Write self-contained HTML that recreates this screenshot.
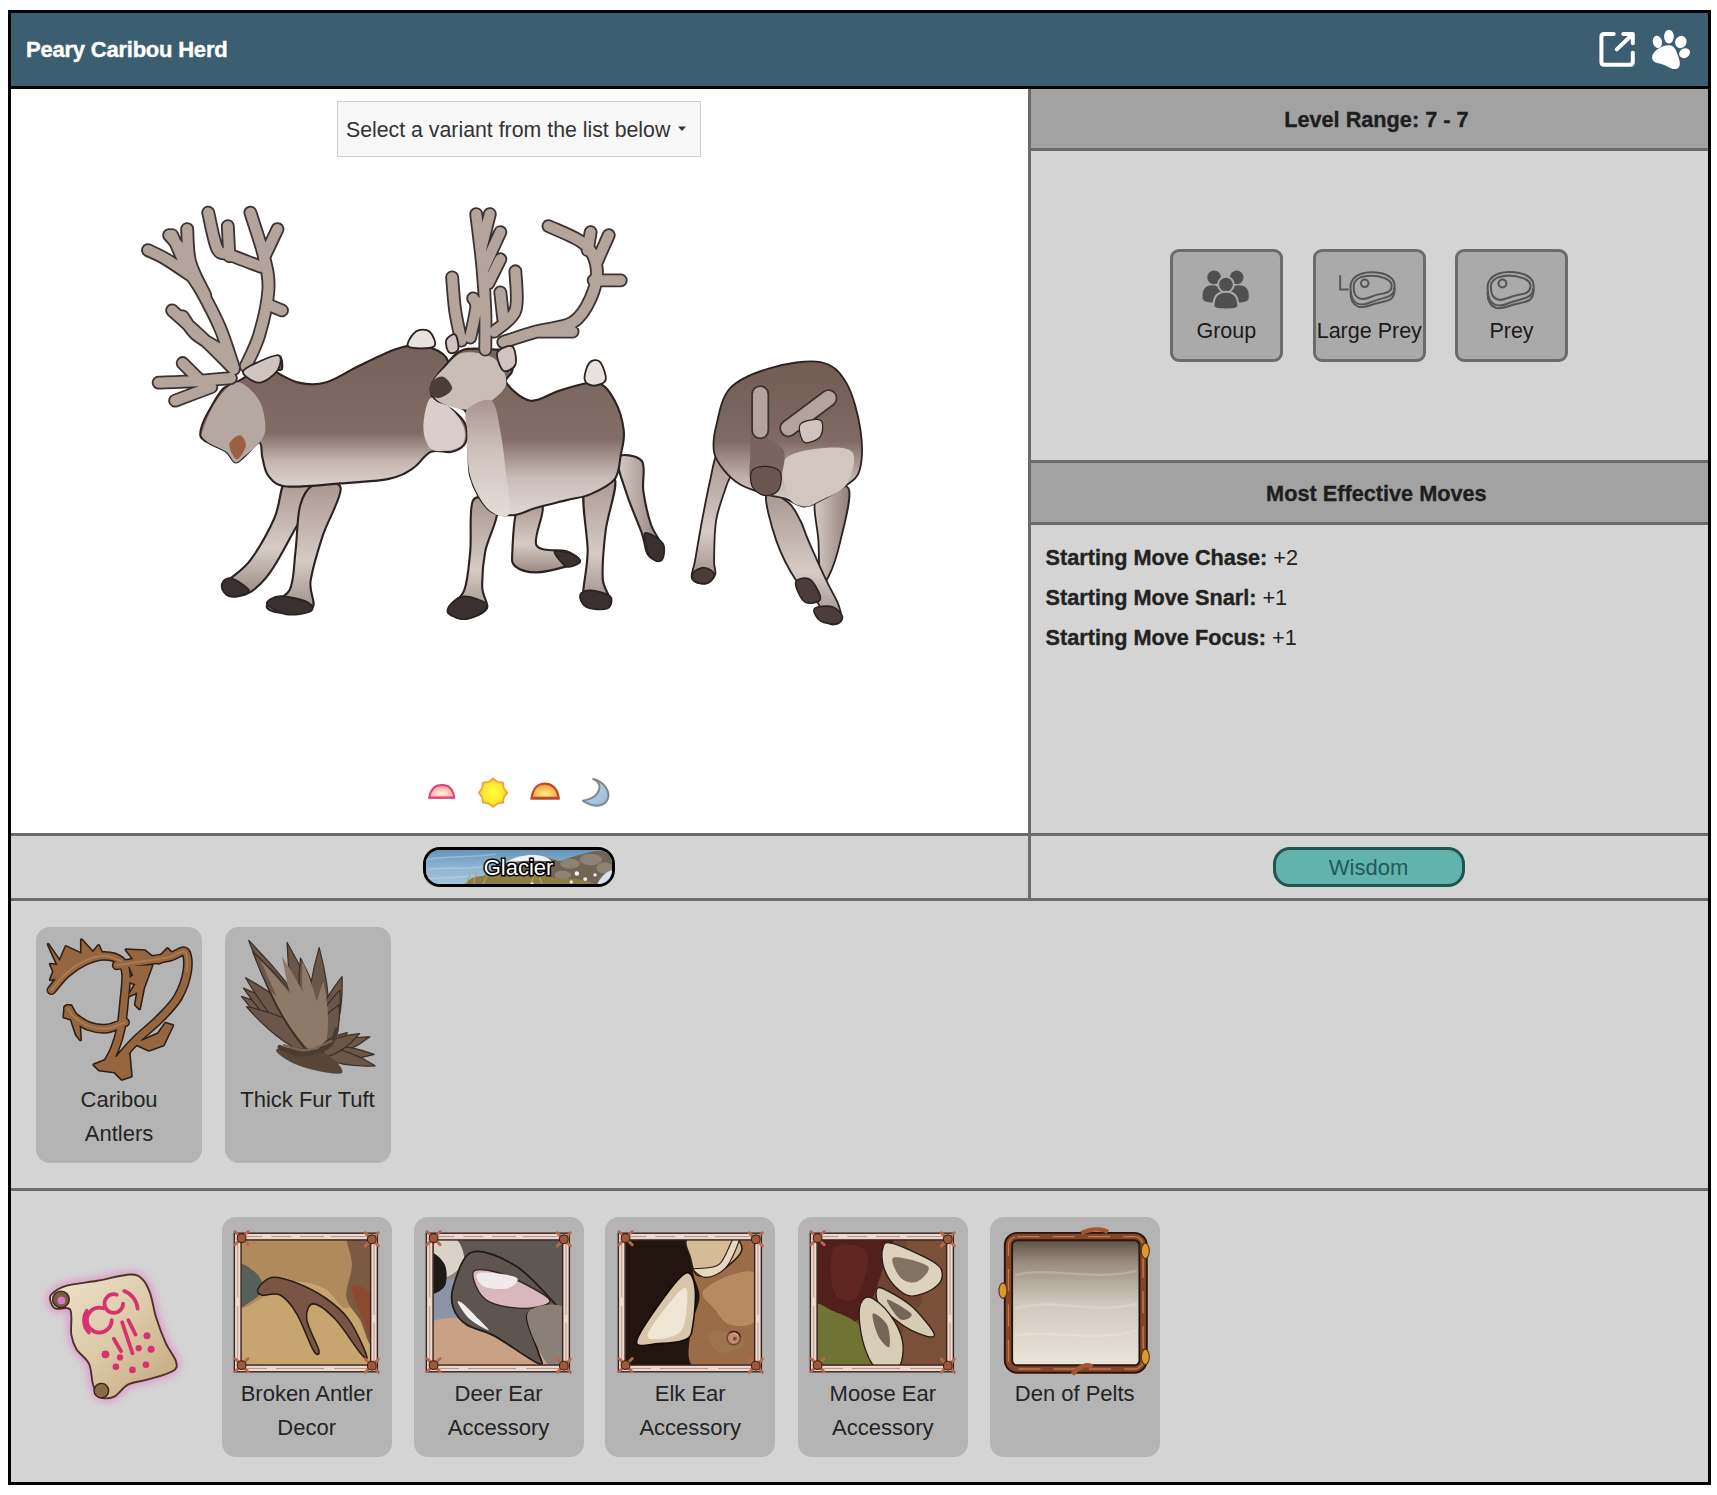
<!DOCTYPE html>
<html><head><meta charset="utf-8">
<style>
html,body{margin:0;padding:0;background:#fff;width:1717px;height:1495px;overflow:hidden;position:relative;font-family:"Liberation Sans",sans-serif;}
.a{position:absolute;}
.ln{position:absolute;background:#6b6b6b;}
.t{position:absolute;white-space:nowrap;}
.btn{position:absolute;top:248.7px;width:106.6px;height:107px;border:3px solid #6b6b6b;border-radius:9px;background:#aaa;}
.btn .lb{position:absolute;left:-5px;right:-5px;top:67px;text-align:center;font-size:21.5px;color:#1b1b1b;white-space:nowrap;}
.card{position:absolute;background:#b4b4b4;border-radius:14px;}
.card .lb{position:absolute;left:-10px;right:-10px;text-align:center;font-size:22px;line-height:34px;color:#242424;}
.mv{position:absolute;left:1045.5px;font-size:21.7px;color:#222;white-space:nowrap;}
.mv b{font-weight:bold;-webkit-text-stroke:0.35px #222;}
</style></head><body>
<!-- outer frame -->
<div class="a" style="left:8px;top:10px;width:1702.7px;height:1474.7px;background:#000"></div>
<div class="a" style="left:10.7px;top:12.8px;width:1697.3px;height:1469.2px;background:#d4d4d4"></div>
<!-- header -->
<div class="a" style="left:10.7px;top:12.8px;width:1697.3px;height:73.2px;background:#3b5e71"></div>
<div class="a" style="left:10.7px;top:86px;width:1697.3px;height:2.9px;background:#000"></div>
<div class="t" id="title" style="left:26px;top:36.5px;letter-spacing:-0.22px;font-size:22px;font-weight:bold;color:#fff;-webkit-text-stroke:0.4px #fff;">Peary Caribou Herd</div>
<!--HDRICONS-->
<svg class="a" style="left:1590px;top:22px" width="110" height="55" viewBox="0 0 1717 858">
<g fill="none" stroke="#fff" stroke-width="62" stroke-linecap="round" stroke-linejoin="round">
<path d="M370,188 H220 Q178,188 178,230 V626 Q178,668 220,668 H626 Q668,668 668,626 V480"/>
<path d="M418,428 L662,194 M520,188 H668 V330"/>
</g>
<g fill="#fff">
<ellipse cx="1052" cy="310" rx="72" ry="96" transform="rotate(-12 1052 310)"/>
<ellipse cx="1232" cy="228" rx="76" ry="106"/>
<ellipse cx="1418" cy="312" rx="88" ry="98" transform="rotate(28 1418 312)"/>
<ellipse cx="1476" cy="486" rx="88" ry="74" transform="rotate(-30 1476 486)"/>
<path d="M1230,362 C1320,362 1345,440 1375,530 C1405,610 1420,690 1370,722 C1320,752 1260,725 1200,690 C1140,655 1060,650 1010,625 C960,600 955,520 1010,465 C1060,410 1140,362 1230,362 Z"/>
</g>
</svg>
<!--/HDRICONS-->
<!-- left white panel -->
<div class="a" style="left:10.7px;top:88.9px;width:1017.3px;height:744.1px;background:#fff"></div>
<!--CARIBOU-->
<svg class="a" style="left:0;top:0" width="1717" height="1495" viewBox="0 0 1717 1495">
<defs>
<linearGradient id="g1" x1="0" y1="0" x2="0" y2="1"><stop offset="0" stop-color="#76625a"/><stop offset="0.62" stop-color="#806c65"/><stop offset="0.82" stop-color="#c4b6b0"/><stop offset="1" stop-color="#dcd2ce"/></linearGradient>
<linearGradient id="g2" x1="0" y1="0" x2="0" y2="1"><stop offset="0" stop-color="#76625a"/><stop offset="0.55" stop-color="#826e67"/><stop offset="0.78" stop-color="#c9bdb8"/><stop offset="1" stop-color="#e0d8d4"/></linearGradient>
<linearGradient id="g3" x1="0" y1="0" x2="0" y2="1"><stop offset="0" stop-color="#725c54"/><stop offset="0.55" stop-color="#7f6b64"/><stop offset="0.8" stop-color="#bfb1ab"/><stop offset="1" stop-color="#d8ceca"/></linearGradient>
<linearGradient id="lg" x1="0" y1="0" x2="0" y2="1"><stop offset="0" stop-color="#a89790"/><stop offset="0.6" stop-color="#d6cbc6"/><stop offset="1" stop-color="#9a8a84"/></linearGradient>
<linearGradient id="lgh" x1="0" y1="0" x2="1" y2="0"><stop offset="0" stop-color="#d6cbc6"/><stop offset="1" stop-color="#8f7f79"/></linearGradient>
<linearGradient id="chestg" x1="0" y1="0" x2="0" y2="1"><stop offset="0" stop-color="#a8968f"/><stop offset="0.45" stop-color="#cfc3be"/><stop offset="1" stop-color="#e4dcd8"/></linearGradient>
<radialGradient id="chest" cx="0.5" cy="0.5" r="0.5"><stop offset="0" stop-color="#e2d9d5"/><stop offset="1" stop-color="#e2d9d5" stop-opacity="0"/></radialGradient>
</defs>
<g transform="translate(130,190) scale(0.30094)">
<path d="M520.0,960.0 C498.3,976.7 500.0,1045.0 480.0,1090.0 C460.0,1135.0 425.0,1195.8 400.0,1230.0 C375.0,1264.2 345.0,1278.3 330.0,1295.0 C315.0,1311.7 301.7,1321.7 310.0,1330.0 C318.3,1338.3 355.8,1352.5 380.0,1345.0 C404.2,1337.5 430.0,1315.8 455.0,1285.0 C480.0,1254.2 504.2,1209.2 530.0,1160.0 C555.8,1110.8 611.7,1023.3 610.0,990.0 C608.3,956.7 541.7,943.3 520.0,960.0 Z" fill="url(#lg)" stroke="#2b2222" stroke-width="7" />
<path d="M610.0,980.0 C632.5,970.0 695.0,961.7 700.0,990.0 C705.0,1018.3 656.7,1098.3 640.0,1150.0 C623.3,1201.7 605.8,1260.0 600.0,1300.0 C594.2,1340.0 621.7,1372.5 605.0,1390.0 C588.3,1407.5 525.0,1406.7 500.0,1405.0 C475.0,1403.3 450.0,1392.5 455.0,1380.0 C460.0,1367.5 514.2,1360.0 530.0,1330.0 C545.8,1300.0 544.2,1246.7 550.0,1200.0 C555.8,1153.3 555.0,1086.7 565.0,1050.0 C575.0,1013.3 587.5,990.0 610.0,980.0 Z" fill="url(#lg)" stroke="#2b2222" stroke-width="7" />
<path d="M305.0,1310.0 C307.5,1300.8 320.0,1286.7 335.0,1290.0 C350.0,1293.3 390.8,1320.0 395.0,1330.0 C399.2,1340.0 372.5,1347.5 360.0,1350.0 C347.5,1352.5 329.2,1351.7 320.0,1345.0 C310.8,1338.3 302.5,1319.2 305.0,1310.0 Z" fill="#3b3030" stroke="#2b2222" stroke-width="6" />
<path d="M455.0,1375.0 C451.7,1365.0 477.5,1350.8 500.0,1350.0 C522.5,1349.2 573.3,1361.7 590.0,1370.0 C606.7,1378.3 611.7,1393.3 600.0,1400.0 C588.3,1406.7 544.2,1414.2 520.0,1410.0 C495.8,1405.8 458.3,1385.0 455.0,1375.0 Z" fill="#3b3030" stroke="#2b2222" stroke-width="6" />
<path d="M480.0,600.0 C489.2,607.5 531.7,633.3 560.0,640.0 C588.3,646.7 616.7,649.2 650.0,640.0 C683.3,630.8 721.7,603.3 760.0,585.0 C798.3,566.7 846.7,541.7 880.0,530.0 C913.3,518.3 933.3,512.5 960.0,515.0 C986.7,517.5 1023.3,530.8 1040.0,545.0 C1056.7,559.2 1065.8,583.3 1060.0,600.0 C1054.2,616.7 1013.3,628.3 1005.0,645.0 C996.7,661.7 999.2,685.8 1010.0,700.0 C1020.8,714.2 1052.5,716.7 1070.0,730.0 C1087.5,743.3 1107.5,761.7 1115.0,780.0 C1122.5,798.3 1122.5,825.0 1115.0,840.0 C1107.5,855.0 1089.2,865.0 1070.0,870.0 C1050.8,875.0 1021.7,860.8 1000.0,870.0 C978.3,879.2 963.3,910.0 940.0,925.0 C916.7,940.0 900.0,951.7 860.0,960.0 C820.0,968.3 756.7,970.8 700.0,975.0 C643.3,979.2 560.0,989.2 520.0,985.0 C480.0,980.8 473.3,965.8 460.0,950.0 C446.7,934.2 445.0,908.3 440.0,890.0 C435.0,871.7 440.0,840.8 430.0,840.0 C420.0,839.2 393.3,874.2 380.0,885.0 C366.7,895.8 360.0,907.5 350.0,905.0 C340.0,902.5 333.3,880.0 320.0,870.0 C306.7,860.0 284.2,853.3 270.0,845.0 C255.8,836.7 240.0,830.8 235.0,820.0 C230.0,809.2 234.2,796.7 240.0,780.0 C245.8,763.3 258.3,740.0 270.0,720.0 C281.7,700.0 295.0,674.2 310.0,660.0 C325.0,645.8 345.0,643.3 360.0,635.0 C375.0,626.7 378.3,624.2 400.0,610.0 C421.7,595.8 472.5,552.5 490.0,550.0 C507.5,547.5 506.7,586.7 505.0,595.0 C503.3,603.3 470.8,592.5 480.0,600.0 Z" fill="url(#g1)" stroke="#2b2222" stroke-width="7" />
<path d="M245.0,790.0 C250.8,773.3 263.3,740.8 275.0,720.0 C286.7,699.2 300.0,678.3 315.0,665.0 C330.0,651.7 345.8,634.2 365.0,640.0 C384.2,645.8 415.8,675.0 430.0,700.0 C444.2,725.0 450.0,766.7 450.0,790.0 C450.0,813.3 441.7,824.2 430.0,840.0 C418.3,855.8 393.3,874.2 380.0,885.0 C366.7,895.8 360.0,907.5 350.0,905.0 C340.0,902.5 333.3,880.0 320.0,870.0 C306.7,860.0 283.3,853.3 270.0,845.0 C256.7,836.7 244.2,829.2 240.0,820.0 C235.8,810.8 239.2,806.7 245.0,790.0 Z" fill="#b5a7a1" stroke="none" stroke-width="0" />
<path d="M330.0,845.0 C331.7,831.7 355.8,814.2 365.0,815.0 C374.2,815.8 386.7,836.7 385.0,850.0 C383.3,863.3 364.2,895.8 355.0,895.0 C345.8,894.2 328.3,858.3 330.0,845.0 Z" fill="#9b5f46" stroke="none" stroke-width="0" />
<path d="M1000.0,690.0 C1015.8,680.0 1051.7,713.3 1070.0,730.0 C1088.3,746.7 1104.2,770.8 1110.0,790.0 C1115.8,809.2 1113.3,832.5 1105.0,845.0 C1096.7,857.5 1077.5,862.5 1060.0,865.0 C1042.5,867.5 1014.2,872.5 1000.0,860.0 C985.8,847.5 975.0,818.3 975.0,790.0 C975.0,761.7 984.2,700.0 1000.0,690.0 Z" fill="#d9cec9" stroke="none" stroke-width="0" />
<path d="M925.0,520.0 C915.0,511.7 938.3,478.3 950.0,470.0 C961.7,461.7 985.0,461.7 995.0,470.0 C1005.0,478.3 1021.7,511.7 1010.0,520.0 C998.3,528.3 935.0,528.3 925.0,520.0 Z" fill="#e8e2de" stroke="#2b2222" stroke-width="6" />
<path d="M385.0,585.0 C392.5,567.5 417.5,522.5 430.0,480.0 C442.5,437.5 457.5,373.3 460.0,330.0 C462.5,286.7 455.0,262.5 445.0,220.0 C435.0,177.5 407.5,99.2 400.0,75.0 M445.0,225.0 C452.5,209.2 482.5,145.8 490.0,130.0 M455.0,380.0 C463.3,383.3 496.7,396.7 505.0,400.0 M435.0,255.0 C417.5,248.3 354.2,225.0 330.0,215.0 C305.8,205.0 301.7,218.3 290.0,195.0 C278.3,171.7 265.0,95.0 260.0,75.0 M330.0,220.0 C329.2,203.3 325.8,136.7 325.0,120.0 M345.0,590.0 C337.5,568.3 317.5,501.7 300.0,460.0 C282.5,418.3 258.3,373.3 240.0,340.0 C221.7,306.7 206.7,291.7 190.0,260.0 C173.3,228.3 148.3,168.3 140.0,150.0 M210.0,290.0 C195.0,280.0 145.0,245.0 120.0,230.0 C95.0,215.0 70.0,205.0 60.0,200.0 M190.0,260.0 C186.7,250.0 180.0,218.3 170.0,200.0 C160.0,181.7 136.7,158.3 130.0,150.0 M250.0,350.0 C241.7,331.7 210.0,276.7 200.0,240.0 C190.0,203.3 191.7,148.3 190.0,130.0 M345.0,595.0 C330.8,580.8 294.2,542.5 260.0,510.0 C225.8,477.5 160.0,418.3 140.0,400.0 M300.0,530.0 C286.7,521.7 240.8,498.3 220.0,480.0 C199.2,461.7 182.5,430.0 175.0,420.0 M335.0,625.0 C315.8,626.7 260.0,632.5 220.0,635.0 C180.0,637.5 115.8,639.2 95.0,640.0 M230.0,630.0 C220.8,620.8 184.2,584.2 175.0,575.0 M270.0,655.0 C250.0,662.5 170.0,692.5 150.0,700.0" fill="none" stroke="#3b3333" stroke-width="46" stroke-linecap="round" stroke-linejoin="round"/>
<path d="M385.0,585.0 C392.5,567.5 417.5,522.5 430.0,480.0 C442.5,437.5 457.5,373.3 460.0,330.0 C462.5,286.7 455.0,262.5 445.0,220.0 C435.0,177.5 407.5,99.2 400.0,75.0 M445.0,225.0 C452.5,209.2 482.5,145.8 490.0,130.0 M455.0,380.0 C463.3,383.3 496.7,396.7 505.0,400.0 M435.0,255.0 C417.5,248.3 354.2,225.0 330.0,215.0 C305.8,205.0 301.7,218.3 290.0,195.0 C278.3,171.7 265.0,95.0 260.0,75.0 M330.0,220.0 C329.2,203.3 325.8,136.7 325.0,120.0 M345.0,590.0 C337.5,568.3 317.5,501.7 300.0,460.0 C282.5,418.3 258.3,373.3 240.0,340.0 C221.7,306.7 206.7,291.7 190.0,260.0 C173.3,228.3 148.3,168.3 140.0,150.0 M210.0,290.0 C195.0,280.0 145.0,245.0 120.0,230.0 C95.0,215.0 70.0,205.0 60.0,200.0 M190.0,260.0 C186.7,250.0 180.0,218.3 170.0,200.0 C160.0,181.7 136.7,158.3 130.0,150.0 M250.0,350.0 C241.7,331.7 210.0,276.7 200.0,240.0 C190.0,203.3 191.7,148.3 190.0,130.0 M345.0,595.0 C330.8,580.8 294.2,542.5 260.0,510.0 C225.8,477.5 160.0,418.3 140.0,400.0 M300.0,530.0 C286.7,521.7 240.8,498.3 220.0,480.0 C199.2,461.7 182.5,430.0 175.0,420.0 M335.0,625.0 C315.8,626.7 260.0,632.5 220.0,635.0 C180.0,637.5 115.8,639.2 95.0,640.0 M230.0,630.0 C220.8,620.8 184.2,584.2 175.0,575.0 M270.0,655.0 C250.0,662.5 170.0,692.5 150.0,700.0" fill="none" stroke="#b3a49c" stroke-width="34" stroke-linecap="round" stroke-linejoin="round"/>
<path d="M375.0,605.0 C375.0,593.3 410.0,579.2 430.0,570.0 C450.0,560.8 485.0,545.0 495.0,550.0 C505.0,555.0 500.8,585.0 490.0,600.0 C479.2,615.0 449.2,639.2 430.0,640.0 C410.8,640.8 375.0,616.7 375.0,605.0 Z" fill="#cfc4bf" stroke="#2b2222" stroke-width="6" />
</g>
<g transform="translate(410,190) scale(0.3011)">
<path d="M690.0,890.0 C698.3,871.7 755.8,881.7 770.0,900.0 C784.2,918.3 770.0,965.0 775.0,1000.0 C780.0,1035.0 790.0,1080.0 800.0,1110.0 C810.0,1140.0 830.0,1160.0 835.0,1180.0 C840.0,1200.0 837.5,1225.0 830.0,1230.0 C822.5,1235.0 800.0,1225.0 790.0,1210.0 C780.0,1195.0 781.7,1173.3 770.0,1140.0 C758.3,1106.7 733.3,1051.7 720.0,1010.0 C706.7,968.3 681.7,908.3 690.0,890.0 Z" fill="url(#lgh)" stroke="#2b2222" stroke-width="7" />
<path d="M780.0,1140.0 C787.5,1133.3 830.8,1160.0 840.0,1175.0 C849.2,1190.0 842.5,1223.3 835.0,1230.0 C827.5,1236.7 804.2,1230.0 795.0,1215.0 C785.8,1200.0 772.5,1146.7 780.0,1140.0 Z" fill="#3b3030" stroke="#2b2222" stroke-width="6" />
<path d="M580.0,990.0 C595.0,950.0 668.3,936.7 680.0,960.0 C691.7,983.3 656.7,1075.0 650.0,1130.0 C643.3,1185.0 638.3,1251.7 640.0,1290.0 C641.7,1328.3 668.3,1345.0 660.0,1360.0 C651.7,1375.0 604.2,1383.3 590.0,1380.0 C575.8,1376.7 575.0,1370.0 575.0,1340.0 C575.0,1310.0 589.2,1258.3 590.0,1200.0 C590.8,1141.7 565.0,1030.0 580.0,990.0 Z" fill="url(#lg)" stroke="#2b2222" stroke-width="7" />
<path d="M565.0,1345.0 C567.5,1335.8 583.3,1329.2 600.0,1330.0 C616.7,1330.8 655.8,1340.0 665.0,1350.0 C674.2,1360.0 668.3,1384.2 655.0,1390.0 C641.7,1395.8 600.0,1392.5 585.0,1385.0 C570.0,1377.5 562.5,1354.2 565.0,1345.0 Z" fill="#3b3030" stroke="#2b2222" stroke-width="6" />
<path d="M360.0,1050.0 C376.7,1025.0 430.0,1028.3 440.0,1050.0 C450.0,1071.7 406.7,1155.0 420.0,1180.0 C433.3,1205.0 496.7,1191.7 520.0,1200.0 C543.3,1208.3 560.0,1221.7 560.0,1230.0 C560.0,1238.3 543.3,1243.3 520.0,1250.0 C496.7,1256.7 448.3,1270.0 420.0,1270.0 C391.7,1270.0 363.3,1261.7 350.0,1250.0 C336.7,1238.3 338.3,1233.3 340.0,1200.0 C341.7,1166.7 343.3,1075.0 360.0,1050.0 Z" fill="url(#lg)" stroke="#2b2222" stroke-width="7" />
<path d="M480.0,1200.0 C483.3,1193.3 525.8,1204.2 540.0,1210.0 C554.2,1215.8 568.3,1228.3 565.0,1235.0 C561.7,1241.7 534.2,1255.8 520.0,1250.0 C505.8,1244.2 476.7,1206.7 480.0,1200.0 Z" fill="#3b3030" stroke="#2b2222" stroke-width="6" />
<path d="M210.0,1030.0 C225.0,1006.7 283.3,1031.7 290.0,1060.0 C296.7,1088.3 258.3,1156.7 250.0,1200.0 C241.7,1243.3 239.2,1288.3 240.0,1320.0 C240.8,1351.7 263.3,1373.3 255.0,1390.0 C246.7,1406.7 211.7,1418.3 190.0,1420.0 C168.3,1421.7 126.7,1415.0 125.0,1400.0 C123.3,1385.0 167.5,1363.3 180.0,1330.0 C192.5,1296.7 195.0,1250.0 200.0,1200.0 C205.0,1150.0 195.0,1053.3 210.0,1030.0 Z" fill="url(#lg)" stroke="#2b2222" stroke-width="7" />
<path d="M125.0,1395.0 C125.8,1382.5 153.3,1353.3 175.0,1350.0 C196.7,1346.7 245.8,1365.0 255.0,1375.0 C264.2,1385.0 244.2,1401.7 230.0,1410.0 C215.8,1418.3 187.5,1427.5 170.0,1425.0 C152.5,1422.5 124.2,1407.5 125.0,1395.0 Z" fill="#3b3030" stroke="#2b2222" stroke-width="6" />
<path d="M70.0,650.0 C75.0,630.0 101.7,600.0 120.0,580.0 C138.3,560.0 150.0,538.3 180.0,530.0 C210.0,521.7 273.3,531.7 300.0,530.0 C326.7,528.3 333.3,508.3 340.0,520.0 C346.7,531.7 343.3,580.0 340.0,600.0 C336.7,620.0 310.0,623.3 320.0,640.0 C330.0,656.7 370.0,695.8 400.0,700.0 C430.0,704.2 463.3,675.0 500.0,665.0 C536.7,655.0 590.0,634.2 620.0,640.0 C650.0,645.8 665.0,673.3 680.0,700.0 C695.0,726.7 706.7,770.0 710.0,800.0 C713.3,830.0 705.0,853.3 700.0,880.0 C695.0,906.7 696.7,938.3 680.0,960.0 C663.3,981.7 626.7,998.3 600.0,1010.0 C573.3,1021.7 550.0,1022.5 520.0,1030.0 C490.0,1037.5 450.0,1046.7 420.0,1055.0 C390.0,1063.3 366.7,1079.2 340.0,1080.0 C313.3,1080.8 283.3,1081.7 260.0,1060.0 C236.7,1038.3 210.8,993.3 200.0,950.0 C189.2,906.7 198.3,836.7 195.0,800.0 C191.7,763.3 197.5,746.7 180.0,730.0 C162.5,713.3 108.3,713.3 90.0,700.0 C71.7,686.7 65.0,670.0 70.0,650.0 Z" fill="url(#g2)" stroke="#2b2222" stroke-width="7" />
<path d="M70.0,650.0 C73.3,630.0 101.7,603.3 120.0,585.0 C138.3,566.7 153.3,544.2 180.0,540.0 C206.7,535.8 256.7,543.3 280.0,560.0 C303.3,576.7 321.7,616.7 320.0,640.0 C318.3,663.3 290.0,685.0 270.0,700.0 C250.0,715.0 228.3,729.2 200.0,730.0 C171.7,730.8 121.7,718.3 100.0,705.0 C78.3,691.7 66.7,670.0 70.0,650.0 Z" fill="#c9bdb8" stroke="none" stroke-width="0" />
<path d="M190.0,730.0 C203.3,713.3 251.7,688.3 270.0,700.0 C288.3,711.7 291.7,758.3 300.0,800.0 C308.3,841.7 315.0,904.2 320.0,950.0 C325.0,995.8 340.0,1056.7 330.0,1075.0 C320.0,1093.3 281.7,1080.8 260.0,1060.0 C238.3,1039.2 211.7,993.3 200.0,950.0 C188.3,906.7 191.7,836.7 190.0,800.0 C188.3,763.3 176.7,746.7 190.0,730.0 Z" fill="url(#chestg)" stroke="none" stroke-width="0" />
<path d="M70.0,640.0 C76.7,630.0 98.3,616.7 110.0,620.0 C121.7,623.3 141.7,648.3 140.0,660.0 C138.3,671.7 111.7,686.7 100.0,690.0 C88.3,693.3 75.0,688.3 70.0,680.0 C65.0,671.7 63.3,650.0 70.0,640.0 Z" fill="#4a3d3a" stroke="none" stroke-width="0" />
<path d="M580.0,630.0 C577.5,617.5 586.7,585.0 595.0,575.0 C603.3,565.0 620.8,560.8 630.0,570.0 C639.2,579.2 653.3,616.7 650.0,630.0 C646.7,643.3 621.7,650.0 610.0,650.0 C598.3,650.0 582.5,642.5 580.0,630.0 Z" fill="#e8e2de" stroke="#2b2222" stroke-width="6" />
<path d="M250.0,530.0 C250.0,508.3 251.7,446.7 250.0,400.0 C248.3,353.3 245.0,303.3 240.0,250.0 C235.0,196.7 223.3,108.3 220.0,80.0 M235.0,200.0 C240.0,180.0 260.0,100.0 265.0,80.0 M245.0,260.0 C254.2,240.0 290.8,160.0 300.0,140.0 M260.0,310.0 C266.7,296.7 293.3,243.3 300.0,230.0 M170.0,500.0 C166.7,483.3 155.0,435.0 150.0,400.0 C145.0,365.0 141.7,308.3 140.0,290.0 M200.0,490.0 C203.3,473.3 218.3,411.7 220.0,390.0 C221.7,368.3 211.7,365.0 210.0,360.0 M280.0,470.0 C291.7,458.3 338.3,433.3 350.0,400.0 C361.7,366.7 350.0,291.7 350.0,270.0 M310.0,430.0 C308.3,415.0 301.7,355.0 300.0,340.0 M310.0,505.0 C328.3,499.2 381.7,480.8 420.0,470.0 C458.3,459.2 510.0,458.3 540.0,440.0 C570.0,421.7 586.7,390.0 600.0,360.0 C613.3,330.0 623.3,290.0 620.0,260.0 C616.7,230.0 606.7,203.3 580.0,180.0 C553.3,156.7 480.0,130.0 460.0,120.0 M430.0,470.0 C448.3,470.0 521.7,470.0 540.0,470.0 M610.0,300.0 C625.0,300.0 685.0,300.0 700.0,300.0 M620.0,240.0 C626.7,225.0 653.3,165.0 660.0,150.0 M590.0,200.0 C591.7,190.0 598.3,150.0 600.0,140.0" fill="none" stroke="#3b3333" stroke-width="46" stroke-linecap="round" stroke-linejoin="round"/>
<path d="M250.0,530.0 C250.0,508.3 251.7,446.7 250.0,400.0 C248.3,353.3 245.0,303.3 240.0,250.0 C235.0,196.7 223.3,108.3 220.0,80.0 M235.0,200.0 C240.0,180.0 260.0,100.0 265.0,80.0 M245.0,260.0 C254.2,240.0 290.8,160.0 300.0,140.0 M260.0,310.0 C266.7,296.7 293.3,243.3 300.0,230.0 M170.0,500.0 C166.7,483.3 155.0,435.0 150.0,400.0 C145.0,365.0 141.7,308.3 140.0,290.0 M200.0,490.0 C203.3,473.3 218.3,411.7 220.0,390.0 C221.7,368.3 211.7,365.0 210.0,360.0 M280.0,470.0 C291.7,458.3 338.3,433.3 350.0,400.0 C361.7,366.7 350.0,291.7 350.0,270.0 M310.0,430.0 C308.3,415.0 301.7,355.0 300.0,340.0 M310.0,505.0 C328.3,499.2 381.7,480.8 420.0,470.0 C458.3,459.2 510.0,458.3 540.0,440.0 C570.0,421.7 586.7,390.0 600.0,360.0 C613.3,330.0 623.3,290.0 620.0,260.0 C616.7,230.0 606.7,203.3 580.0,180.0 C553.3,156.7 480.0,130.0 460.0,120.0 M430.0,470.0 C448.3,470.0 521.7,470.0 540.0,470.0 M610.0,300.0 C625.0,300.0 685.0,300.0 700.0,300.0 M620.0,240.0 C626.7,225.0 653.3,165.0 660.0,150.0 M590.0,200.0 C591.7,190.0 598.3,150.0 600.0,140.0" fill="none" stroke="#b3a49c" stroke-width="34" stroke-linecap="round" stroke-linejoin="round"/>
<path d="M290.0,540.0 C295.0,526.7 330.0,513.3 340.0,520.0 C350.0,526.7 355.0,566.7 350.0,580.0 C345.0,593.3 320.0,606.7 310.0,600.0 C300.0,593.3 285.0,553.3 290.0,540.0 Z" fill="#cfc4bf" stroke="#2b2222" stroke-width="6" />
<path d="M120.0,500.0 C123.3,490.0 143.3,475.0 150.0,480.0 C156.7,485.0 163.3,520.0 160.0,530.0 C156.7,540.0 136.7,545.0 130.0,540.0 C123.3,535.0 116.7,510.0 120.0,500.0 Z" fill="#cfc4bf" stroke="#2b2222" stroke-width="6" />
</g>
<g transform="translate(680,340) scale(0.2006)">
<path d="M190.0,560.0 C208.3,550.0 253.3,611.7 260.0,640.0 C266.7,668.3 243.3,686.7 230.0,730.0 C216.7,773.3 190.0,838.3 180.0,900.0 C170.0,961.7 170.8,1055.0 170.0,1100.0 C169.2,1145.0 181.7,1150.8 175.0,1170.0 C168.3,1189.2 149.2,1211.7 130.0,1215.0 C110.8,1218.3 69.2,1209.2 60.0,1190.0 C50.8,1170.8 66.7,1148.3 75.0,1100.0 C83.3,1051.7 97.5,966.7 110.0,900.0 C122.5,833.3 136.7,756.7 150.0,700.0 C163.3,643.3 171.7,570.0 190.0,560.0 Z" fill="url(#lg)" stroke="#2b2222" stroke-width="9" />
<path d="M65.0,1160.0 C72.5,1148.3 102.5,1134.2 120.0,1135.0 C137.5,1135.8 166.7,1152.5 170.0,1165.0 C173.3,1177.5 155.8,1203.3 140.0,1210.0 C124.2,1216.7 87.5,1213.3 75.0,1205.0 C62.5,1196.7 57.5,1171.7 65.0,1160.0 Z" fill="#4a3d3a" stroke="#2b2222" stroke-width="8" />
<path d="M680.0,780.0 C705.0,736.7 820.0,703.3 840.0,740.0 C860.0,776.7 816.7,926.7 800.0,1000.0 C783.3,1073.3 756.7,1148.3 740.0,1180.0 C723.3,1211.7 708.3,1220.0 700.0,1190.0 C691.7,1160.0 693.3,1068.3 690.0,1000.0 C686.7,931.7 655.0,823.3 680.0,780.0 Z" fill="url(#lgh)" stroke="#2b2222" stroke-width="9" />
<path d="M430.0,770.0 C440.0,738.3 511.7,788.3 540.0,810.0 C568.3,831.7 583.3,868.3 600.0,900.0 C616.7,931.7 618.3,950.0 640.0,1000.0 C661.7,1050.0 705.0,1146.7 730.0,1200.0 C755.0,1253.3 778.3,1286.7 790.0,1320.0 C801.7,1353.3 808.3,1385.0 800.0,1400.0 C791.7,1415.0 760.0,1426.7 740.0,1410.0 C720.0,1393.3 706.7,1335.0 680.0,1300.0 C653.3,1265.0 613.3,1250.0 580.0,1200.0 C546.7,1150.0 505.0,1071.7 480.0,1000.0 C455.0,928.3 420.0,801.7 430.0,770.0 Z" fill="url(#lg)" stroke="#2b2222" stroke-width="9" />
<path d="M580.0,1200.0 C590.0,1189.2 630.0,1180.0 650.0,1195.0 C670.0,1210.0 703.3,1270.8 700.0,1290.0 C696.7,1309.2 648.3,1315.0 630.0,1310.0 C611.7,1305.0 598.3,1278.3 590.0,1260.0 C581.7,1241.7 570.0,1210.8 580.0,1200.0 Z" fill="#4a3d3a" stroke="#2b2222" stroke-width="8" />
<path d="M670.0,1340.0 C680.0,1328.3 736.7,1323.3 760.0,1330.0 C783.3,1336.7 806.7,1365.8 810.0,1380.0 C813.3,1394.2 798.3,1411.7 780.0,1415.0 C761.7,1418.3 718.3,1412.5 700.0,1400.0 C681.7,1387.5 660.0,1351.7 670.0,1340.0 Z" fill="#4a3d3a" stroke="#2b2222" stroke-width="8" />
<path d="M180.0,430.0 C193.3,376.7 205.0,288.3 250.0,240.0 C295.0,191.7 375.0,161.7 450.0,140.0 C525.0,118.3 636.7,97.5 700.0,110.0 C763.3,122.5 796.7,158.3 830.0,215.0 C863.3,271.7 889.2,377.5 900.0,450.0 C910.8,522.5 908.3,603.3 895.0,650.0 C881.7,696.7 852.5,705.0 820.0,730.0 C787.5,755.0 733.3,783.3 700.0,800.0 C666.7,816.7 650.0,831.7 620.0,830.0 C590.0,828.3 551.7,800.0 520.0,790.0 C488.3,780.0 466.7,781.7 430.0,770.0 C393.3,758.3 335.0,740.0 300.0,720.0 C265.0,700.0 241.7,676.7 220.0,650.0 C198.3,623.3 176.7,596.7 170.0,560.0 C163.3,523.3 166.7,483.3 180.0,430.0 Z" fill="url(#g3)" stroke="#2b2222" stroke-width="9" />
<path d="M520.0,600.0 C546.7,560.0 643.3,546.7 700.0,540.0 C756.7,533.3 838.3,530.0 860.0,560.0 C881.7,590.0 856.7,680.0 830.0,720.0 C803.3,760.0 735.0,781.7 700.0,800.0 C665.0,818.3 646.7,833.3 620.0,830.0 C593.3,826.7 556.7,818.3 540.0,780.0 C523.3,741.7 493.3,640.0 520.0,600.0 Z" fill="#d2c6c1" stroke="none" stroke-width="0" />
<path d="M360.0,450.0 C376.7,436.7 423.3,481.7 450.0,500.0 C476.7,518.3 511.7,526.7 520.0,560.0 C528.3,593.3 508.3,665.0 500.0,700.0 C491.7,735.0 486.7,758.3 470.0,770.0 C453.3,781.7 420.0,781.7 400.0,770.0 C380.0,758.3 358.3,731.7 350.0,700.0 C341.7,668.3 348.3,621.7 350.0,580.0 C351.7,538.3 343.3,463.3 360.0,450.0 Z" fill="#7a655e" stroke="none" stroke-width="0" />
<path d="M360.0,650.0 C371.7,633.3 406.7,628.3 430.0,630.0 C453.3,631.7 490.0,640.0 500.0,660.0 C510.0,680.0 503.3,730.8 490.0,750.0 C476.7,769.2 441.7,778.3 420.0,775.0 C398.3,771.7 370.0,750.8 360.0,730.0 C350.0,709.2 348.3,666.7 360.0,650.0 Z" fill="#6a5650" stroke="#2b2222" stroke-width="6" />
<path d="M400.0,450.0 C400.0,420.0 400.0,300.0 400.0,270.0 M540.0,440.0 C573.3,415.0 706.7,315.0 740.0,290.0" fill="none" stroke="#3b3333" stroke-width="90" stroke-linecap="round" stroke-linejoin="round"/>
<path d="M400.0,450.0 C400.0,420.0 400.0,300.0 400.0,270.0 M540.0,440.0 C573.3,415.0 706.7,315.0 740.0,290.0" fill="none" stroke="#b3a49c" stroke-width="72" stroke-linecap="round" stroke-linejoin="round"/>
<path d="M600.0,420.0 C613.3,401.7 683.3,390.0 700.0,400.0 C716.7,410.0 713.3,461.7 700.0,480.0 C686.7,498.3 636.7,520.0 620.0,510.0 C603.3,500.0 586.7,438.3 600.0,420.0 Z" fill="#cfc4bf" stroke="#2b2222" stroke-width="6" />
</g>
</svg>
<!--/CARIBOU-->
<!-- right headers -->
<div class="a" style="left:1030.75px;top:88.9px;width:677.25px;height:58.8px;background:#a2a2a2"></div>
<div class="ln" style="left:1030.75px;top:147.7px;width:677.25px;height:3.2px"></div>
<div class="ln" style="left:1030.75px;top:459.9px;width:677.25px;height:2.85px"></div>
<div class="a" style="left:1030.75px;top:462.75px;width:677.25px;height:59.15px;background:#a2a2a2"></div>
<div class="ln" style="left:1030.75px;top:521.9px;width:677.25px;height:3px"></div>
<div class="ln" style="left:1028px;top:88.9px;width:2.75px;height:809.1px"></div>
<div class="ln" style="left:10.7px;top:833px;width:1697.3px;height:2.8px"></div>
<div class="ln" style="left:10.7px;top:898px;width:1697.3px;height:2.9px"></div>
<div class="ln" style="left:10.7px;top:1187.7px;width:1697.3px;height:3.5px"></div>

<div class="t" style="left:1030.75px;width:677.25px;top:107px;padding-left:14px;box-sizing:border-box;text-align:center;font-size:21.7px;font-weight:bold;color:#1e1e1e;-webkit-text-stroke:0.35px #1e1e1e">Level Range: 7 - 7</div>
<div class="t" style="left:1030.75px;width:677.25px;top:480.5px;padding-left:14px;box-sizing:border-box;text-align:center;font-size:21.7px;font-weight:bold;color:#1e1e1e;-webkit-text-stroke:0.35px #1e1e1e">Most Effective Moves</div>

<div class="mv" style="top:545px"><b>Starting Move Chase:</b> +2</div>
<div class="mv" style="top:585px"><b>Starting Move Snarl:</b> +1</div>
<div class="mv" style="top:625px"><b>Starting Move Focus:</b> +1</div>

<!-- buttons -->
<div class="btn" style="left:1170px"><div class="lb">Group</div></div>
<div class="btn" style="left:1313px"><div class="lb">Large Prey</div></div>
<div class="btn" style="left:1455.2px"><div class="lb">Prey</div></div>

<!--BTNICONS-->
<svg class="a" style="left:1160px;top:240px" width="140" height="130" viewBox="0 0 1610 1495">
<g fill="#505050" stroke="#aaaaaa" stroke-width="22">
<path d="M490,670 C480,560 530,520 600,520 C660,520 700,560 700,600 L640,720 C560,720 495,710 490,670 Z" stroke="none"/>
<path d="M1020,670 C1030,560 980,520 910,520 C850,520 810,560 810,600 L870,720 C950,720 1015,710 1020,670 Z" stroke="none"/>
<circle cx="622" cy="430" r="78" stroke="none"/>
<circle cx="882" cy="430" r="78" stroke="none"/>
<circle cx="758" cy="512" r="90"/>
<path d="M615,760 C615,640 670,595 757,595 C845,595 900,640 900,760 C900,790 820,800 757,800 C690,800 615,790 615,760 Z"/>
</g>
</svg>
<svg class="a" style="left:1300px;top:240px" width="140" height="130" viewBox="0 0 1610 1495">
<g transform="translate(55,18) scale(0.96)"><g fill="none" stroke="#555" stroke-width="24" stroke-linejoin="round" stroke-linecap="round">
<path d="M548,560 C540,440 640,372 790,368 C930,365 1060,410 1075,510 C1085,580 1060,640 990,665 C900,690 850,700 780,730 C700,765 620,760 580,700 C555,660 550,610 548,560 Z"/>
<path d="M585,540 C585,460 660,412 790,410 C910,410 1030,450 1040,520 C1045,580 1010,610 950,620 C880,630 840,640 770,670 C700,700 640,690 605,640 C590,610 585,575 585,540 Z"/>
<path d="M548,600 C545,680 560,750 640,780 C700,800 760,770 840,745 C920,720 980,720 1030,690 C1070,660 1078,620 1075,560"/>
<circle cx="718" cy="500" r="45"/>
</g></g>
<path d="M462,405 V570 H560" fill="none" stroke="#555" stroke-width="22"/>
</svg>
<svg class="a" style="left:1440px;top:240px" width="140" height="130" viewBox="0 0 1610 1495"><g fill="none" stroke="#555" stroke-width="24" stroke-linejoin="round" stroke-linecap="round">
<path d="M548,560 C540,440 640,372 790,368 C930,365 1060,410 1075,510 C1085,580 1060,640 990,665 C900,690 850,700 780,730 C700,765 620,760 580,700 C555,660 550,610 548,560 Z"/>
<path d="M585,540 C585,460 660,412 790,410 C910,410 1030,450 1040,520 C1045,580 1010,610 950,620 C880,630 840,640 770,670 C700,700 640,690 605,640 C590,610 585,575 585,540 Z"/>
<path d="M548,600 C545,680 560,750 640,780 C700,800 760,770 840,745 C920,720 980,720 1030,690 C1070,660 1078,620 1075,560"/>
<circle cx="718" cy="500" r="45"/>
</g></svg>
<!--/BTNICONS-->
<!-- dropdown -->
<div class="a" style="left:337px;top:101px;width:362px;height:54.4px;border:1px solid #cfcfcf;background:#f8f8f8"></div>
<div class="t" style="left:346px;top:118px;font-size:21.3px;color:#333">Select a variant from the list below</div>

<!--TIMEICONS-->
<svg class="a" style="left:410px;top:760px" width="220" height="60" viewBox="0 0 1717 468">
<defs>
<radialGradient id="dawn" cx="0.5" cy="0.7" r="0.6"><stop offset="0" stop-color="#fff6c0"/><stop offset="1" stop-color="#f6a0b8"/></radialGradient>
<radialGradient id="sun" cx="0.5" cy="0.5" r="0.5"><stop offset="0" stop-color="#ffff40"/><stop offset="0.7" stop-color="#ffe830"/><stop offset="1" stop-color="#f8b030"/></radialGradient>
<radialGradient id="dusk" cx="0.5" cy="0.7" r="0.6"><stop offset="0" stop-color="#fff080"/><stop offset="1" stop-color="#f0a040"/></radialGradient>
<linearGradient id="moon" x1="0" y1="0" x2="1" y2="1"><stop offset="0" stop-color="#c8dcf0"/><stop offset="1" stop-color="#98b8d8"/></linearGradient>
</defs>
<path d="M150,292 C165,210 210,195 248,195 C290,195 335,215 345,292 Z" fill="url(#dawn)" stroke="#e0407a" stroke-width="16" stroke-linejoin="round"/>
<path d="M140,292 H352 V302 H140 Z" fill="#e0407a"/>
<path d="M648,143 L683,170 L727,176 L733,220 L760,255 L733,290 L727,334 L683,340 L648,367 L613,340 L569,334 L563,290 L536,255 L563,220 L569,176 L613,170 Z" fill="url(#sun)" stroke="#f0a030" stroke-width="12" stroke-linejoin="round"/>
<path d="M950,295 C960,215 1005,185 1052,185 C1100,185 1150,215 1160,295 Z" fill="url(#dusk)" stroke="#c04830" stroke-width="18" stroke-linejoin="round"/>
<path d="M940,292 H1168 V310 H940 Z" fill="#c04830"/>
<path d="M1430,148 C1520,170 1560,250 1545,300 C1525,360 1450,380 1350,318 C1420,305 1470,280 1478,220 C1482,185 1460,160 1430,148 Z" fill="url(#moon)" stroke="#808890" stroke-width="16" stroke-linejoin="round"/>
</svg>
<svg class="a" style="left:676px;top:124px" width="12" height="10" viewBox="0 0 12 10"><path d="M2,2.5 H10 L6,7 Z" fill="#333"/></svg>
<!--/TIMEICONS-->
<!-- pills -->
<div class="a" style="left:423px;top:846.8px;width:185.6px;height:33.8px;border:3px solid #000;border-radius:17px;overflow:hidden;background:#7aa3c0">
<svg style="position:absolute;left:-3px;top:-3px" width="191.6" height="39.8" viewBox="0 0 1370 285" preserveAspectRatio="none">
<defs><linearGradient id="sky" x1="0" y1="0" x2="0" y2="1"><stop offset="0" stop-color="#5f8fb4"/><stop offset="0.5" stop-color="#8db5d2"/><stop offset="1" stop-color="#a8c6dc"/></linearGradient></defs>
<rect x="0" y="0" width="1370" height="285" fill="url(#sky)"/>
<g fill="none" stroke="#d8e8f2" stroke-opacity="0.35" stroke-width="10"><path d="M20,90 C200,60 350,80 520,50 M40,160 C200,140 320,170 480,130 M0,230 C150,210 260,230 380,200"/></g>
<path d="M400,285 L430,210 L520,160 L600,110 L700,70 L860,70 L980,100 L1100,60 L1220,30 L1370,20 L1370,285 Z" fill="#716656"/>
<path d="M590,115 C640,75 720,55 800,58 C860,60 900,80 920,105 C850,95 700,95 590,115 Z" fill="#eef3f6"/>
<g fill="#8e8272"><ellipse cx="1050" cy="120" rx="70" ry="35"/><ellipse cx="1200" cy="90" rx="80" ry="40"/><ellipse cx="1300" cy="150" rx="60" ry="40"/><ellipse cx="1000" cy="200" rx="60" ry="30"/></g>
<path d="M280,285 C320,230 380,200 450,210 C520,170 620,190 700,200 C800,190 900,210 1000,230 C1100,220 1200,240 1260,285 Z" fill="#8c7c45"/>
<g stroke="#b3a564" stroke-width="8"><path d="M300,285 L340,190 M360,285 L380,170 M420,285 L470,180 M760,285 L800,200 M860,285 L830,210"/></g>
<g fill="#eef2f4"><circle cx="1100" cy="190" r="16"/><circle cx="1160" cy="230" r="14"/><circle cx="1060" cy="250" r="12"/><circle cx="1230" cy="200" r="12"/><circle cx="780" cy="265" r="12"/></g>
<path d="M1240,285 C1260,220 1310,170 1370,160 L1370,285 Z" fill="#d8e2ea"/>
</svg></div>
<div class="t" style="left:423px;width:191px;top:855px;text-align:center;font-size:22px;color:#fff;-webkit-text-stroke:3px #000;paint-order:stroke fill">Glacier</div>
<div class="a" style="left:1273px;top:846.8px;width:185.6px;height:33.8px;border:3px solid #1f5450;border-radius:17px;background:#62b3ad"></div>
<div class="t" style="left:1273px;width:191px;top:855px;text-align:center;font-size:22px;color:#235b57">Wisdom</div>

<!-- item cards -->
<div class="card" style="left:35.8px;top:926.8px;width:166.6px;height:236px"><div class="lb" style="top:156px">Caribou<br>Antlers</div></div>
<div class="card" style="left:224.5px;top:926.8px;width:166px;height:236px"><div class="lb" style="top:156px">Thick Fur Tuft</div></div>

<div class="card" style="left:221.7px;top:1216.9px;width:170px;height:240px"><div class="lb" style="top:160px">Broken Antler<br>Decor</div></div>
<div class="card" style="left:413.6px;top:1216.9px;width:170px;height:240px"><div class="lb" style="top:160px">Deer Ear<br>Accessory</div></div>
<div class="card" style="left:605.2px;top:1216.9px;width:170px;height:240px"><div class="lb" style="top:160px">Elk Ear<br>Accessory</div></div>
<div class="card" style="left:797.8px;top:1216.9px;width:170px;height:240px"><div class="lb" style="top:160px">Moose Ear<br>Accessory</div></div>
<div class="card" style="left:989.7px;top:1216.9px;width:170px;height:240px"><div class="lb" style="top:160px">Den of Pelts</div></div>

<!--ITEMS-->
<svg class="a" style="left:40px;top:930px" width="160" height="155" viewBox="0 0 1543 1495">
<path d="M80,140 L190,300 L250,160 L400,230 L400,95 L510,215 L565,150 L610,250 L430,300 L300,400 L180,540 L110,600 L150,470 L100,480 L130,400 L100,330 L170,340 Z" fill="#8f623f" stroke="#2e1e14" stroke-width="30" stroke-linejoin="round"/>
<path d="M860,350 L1080,340 L1000,560 L960,760 L920,720 L940,600 L850,640 L920,520 L820,490 L900,440 Z" fill="#8f623f" stroke="#2e1e14" stroke-width="30" stroke-linejoin="round"/>
<path d="M830,190 L1010,200 L1120,290 L1230,180 L1300,250 L1150,320 L900,280 Z" fill="#8f623f" stroke="#2e1e14" stroke-width="30" stroke-linejoin="round"/>
<path d="M900,1090 L1050,1160 L1190,1110 L1280,920 L1210,900 L1140,1000 L1000,1060 Z" fill="#8f623f" stroke="#2e1e14" stroke-width="30" stroke-linejoin="round"/>
<path d="M520,1300 L700,1230 L860,1190 L880,1410 L790,1440 L720,1370 L570,1350 Z" fill="#8f623f" stroke="#2e1e14" stroke-width="30" stroke-linejoin="round"/>
<path d="M240,740 L300,730 L380,880 L390,1060 L350,1010 L300,860 L230,840 Z" fill="#8f623f" stroke="#2e1e14" stroke-width="30" stroke-linejoin="round"/>
<path d="M110.0,580.0 C133.3,553.3 196.7,466.7 250.0,420.0 C303.3,373.3 368.3,328.3 430.0,300.0 C491.7,271.7 561.7,250.0 620.0,250.0 C678.3,250.0 745.0,270.0 780.0,300.0 C815.0,330.0 825.0,363.3 830.0,430.0 C835.0,496.7 818.3,613.3 810.0,700.0 C801.7,786.7 795.0,875.0 780.0,950.0 C765.0,1025.0 743.3,1091.7 720.0,1150.0 C696.7,1208.3 653.3,1275.0 640.0,1300.0 M820.0,890.0 C791.7,900.0 706.7,943.3 650.0,950.0 C593.3,956.7 533.3,948.3 480.0,930.0 C426.7,911.7 365.0,868.3 330.0,840.0 C295.0,811.7 280.0,773.3 270.0,760.0 M740.0,340.0 C783.3,333.3 915.0,313.3 1000.0,300.0 C1085.0,286.7 1183.3,275.0 1250.0,260.0 C1316.7,245.0 1371.7,186.7 1400.0,210.0 C1428.3,233.3 1431.7,326.7 1420.0,400.0 C1408.3,473.3 1375.0,573.3 1330.0,650.0 C1285.0,726.7 1213.3,795.0 1150.0,860.0 C1086.7,925.0 1008.3,983.3 950.0,1040.0 C891.7,1096.7 841.7,1151.7 800.0,1200.0 C758.3,1248.3 716.7,1308.3 700.0,1330.0" fill="none" stroke="#2e1e14" stroke-width="95" stroke-linecap="round" stroke-linejoin="round" />
<path d="M110.0,580.0 C133.3,553.3 196.7,466.7 250.0,420.0 C303.3,373.3 368.3,328.3 430.0,300.0 C491.7,271.7 561.7,250.0 620.0,250.0 C678.3,250.0 745.0,270.0 780.0,300.0 C815.0,330.0 825.0,363.3 830.0,430.0 C835.0,496.7 818.3,613.3 810.0,700.0 C801.7,786.7 795.0,875.0 780.0,950.0 C765.0,1025.0 743.3,1091.7 720.0,1150.0 C696.7,1208.3 653.3,1275.0 640.0,1300.0 M820.0,890.0 C791.7,900.0 706.7,943.3 650.0,950.0 C593.3,956.7 533.3,948.3 480.0,930.0 C426.7,911.7 365.0,868.3 330.0,840.0 C295.0,811.7 280.0,773.3 270.0,760.0 M740.0,340.0 C783.3,333.3 915.0,313.3 1000.0,300.0 C1085.0,286.7 1183.3,275.0 1250.0,260.0 C1316.7,245.0 1371.7,186.7 1400.0,210.0 C1428.3,233.3 1431.7,326.7 1420.0,400.0 C1408.3,473.3 1375.0,573.3 1330.0,650.0 C1285.0,726.7 1213.3,795.0 1150.0,860.0 C1086.7,925.0 1008.3,983.3 950.0,1040.0 C891.7,1096.7 841.7,1151.7 800.0,1200.0 C758.3,1248.3 716.7,1308.3 700.0,1330.0" fill="none" stroke="#95663f" stroke-width="66" stroke-linecap="round" stroke-linejoin="round" />
<path d="M80,140 L190,300 L250,160 L400,230 L400,95 L510,215 L565,150 L610,250 L430,300 L300,400 L180,540 L110,600 L150,470 L100,480 L130,400 L100,330 L170,340 Z" fill="#95663f" stroke="none" stroke-width="0" stroke-linejoin="round"/>
<path d="M860,350 L1080,340 L1000,560 L960,760 L920,720 L940,600 L850,640 L920,520 L820,490 L900,440 Z" fill="#95663f" stroke="none" stroke-width="0" stroke-linejoin="round"/>
<path d="M830,190 L1010,200 L1120,290 L1230,180 L1300,250 L1150,320 L900,280 Z" fill="#95663f" stroke="none" stroke-width="0" stroke-linejoin="round"/>
<path d="M900,1090 L1050,1160 L1190,1110 L1280,920 L1210,900 L1140,1000 L1000,1060 Z" fill="#95663f" stroke="none" stroke-width="0" stroke-linejoin="round"/>
<path d="M520,1300 L700,1230 L860,1190 L880,1410 L790,1440 L720,1370 L570,1350 Z" fill="#95663f" stroke="none" stroke-width="0" stroke-linejoin="round"/>
<path d="M240,740 L300,730 L380,880 L390,1060 L350,1010 L300,860 L230,840 Z" fill="#95663f" stroke="none" stroke-width="0" stroke-linejoin="round"/>
<path d="M110.0,580.0 C133.3,553.3 196.7,466.7 250.0,420.0 C303.3,373.3 368.3,328.3 430.0,300.0 C491.7,271.7 561.7,250.0 620.0,250.0 C678.3,250.0 753.3,291.7 780.0,300.0 M820.0,890.0 C791.7,900.0 706.7,943.3 650.0,950.0 C593.3,956.7 533.3,948.3 480.0,930.0 C426.7,911.7 365.0,868.3 330.0,840.0 C295.0,811.7 280.0,773.3 270.0,760.0 M740.0,340.0 C783.3,333.3 915.0,313.3 1000.0,300.0 C1085.0,286.7 1183.3,275.0 1250.0,260.0 C1316.7,245.0 1371.7,186.7 1400.0,210.0 C1428.3,233.3 1416.7,368.3 1420.0,400.0" fill="none" stroke="#c09068" stroke-width="16" stroke-linecap="round" stroke-linejoin="round" opacity="0.55"/>
</svg>
<svg class="a" style="left:230px;top:930px" width="160" height="155" viewBox="0 0 1543 1495">
<path d="M901,1076 Q602,797 110,640 Q432,1044 799,1224 Z" fill="#6a574a" stroke="#3a2e26" stroke-width="12" stroke-linejoin="round"/>
<path d="M907,1080 Q621,768 130,560 Q431,1001 793,1220 Z" fill="#6a574a" stroke="#3a2e26" stroke-width="12" stroke-linejoin="round"/>
<path d="M913,1086 Q640,733 150,460 Q430,946 787,1214 Z" fill="#6a574a" stroke="#3a2e26" stroke-width="12" stroke-linejoin="round"/>
<path d="M896,1073 Q616,837 160,740 Q463,1094 804,1227 Z" fill="#6a574a" stroke="#3a2e26" stroke-width="12" stroke-linejoin="round"/>
<path d="M923,1098 Q720,712 290,370 Q476,886 777,1202 Z" fill="#6a574a" stroke="#3a2e26" stroke-width="12" stroke-linejoin="round"/>
<path d="M926,1102 Q675,597 180,100 Q422,758 774,1198 Z" fill="#6a574a" stroke="#3a2e26" stroke-width="12" stroke-linejoin="round"/>
<path d="M925,1100 Q691,643 220,210 Q442,811 775,1200 Z" fill="#6a574a" stroke="#3a2e26" stroke-width="12" stroke-linejoin="round"/>
<path d="M936,1125 Q859,645 550,120 Q571,728 764,1175 Z" fill="#6a574a" stroke="#3a2e26" stroke-width="12" stroke-linejoin="round"/>
<path d="M938,1133 Q921,726 680,270 Q626,782 762,1167 Z" fill="#6a574a" stroke="#3a2e26" stroke-width="12" stroke-linejoin="round"/>
<path d="M940,1151 Q1004,711 860,170 Q705,707 760,1149 Z" fill="#6a574a" stroke="#3a2e26" stroke-width="12" stroke-linejoin="round"/>
<path d="M936,1178 Q1096,882 1080,450 Q811,788 764,1122 Z" fill="#6a574a" stroke="#3a2e26" stroke-width="12" stroke-linejoin="round"/>
<path d="M934,1181 Q1085,945 1060,580 Q804,842 766,1119 Z" fill="#6a574a" stroke="#3a2e26" stroke-width="12" stroke-linejoin="round"/>
<path d="M932,1188 Q1076,1020 1050,720 Q804,893 768,1112 Z" fill="#6a574a" stroke="#3a2e26" stroke-width="12" stroke-linejoin="round"/>
<path d="M905,1114 Q695,708 300,300 Q510,827 795,1186 Z" fill="#8f7a6a" stroke="none" stroke-width="12" stroke-linejoin="round"/>
<path d="M912,1126 Q795,705 500,250 Q590,785 788,1174 Z" fill="#8f7a6a" stroke="none" stroke-width="12" stroke-linejoin="round"/>
<path d="M915,1139 Q891,748 700,300 Q674,787 785,1161 Z" fill="#8f7a6a" stroke="none" stroke-width="12" stroke-linejoin="round"/>
<path d="M916,1155 Q982,866 900,500 Q763,849 784,1145 Z" fill="#8f7a6a" stroke="none" stroke-width="12" stroke-linejoin="round"/>
<path d="M901,1108 Q733,833 400,600 Q562,972 799,1192 Z" fill="#8f7a6a" stroke="none" stroke-width="12" stroke-linejoin="round"/>
<path d="M934,1222 Q1061,1164 1130,990 Q946,1025 866,1138 Z" fill="#6a574a" stroke="#3a2e26" stroke-width="12" stroke-linejoin="round"/>
<path d="M917,1231 Q1131,1198 1350,1030 Q1074,1027 883,1129 Z" fill="#6a574a" stroke="#3a2e26" stroke-width="12" stroke-linejoin="round"/>
<path d="M898,1234 Q1117,1279 1390,1200 Q1124,1099 902,1126 Z" fill="#6a574a" stroke="#3a2e26" stroke-width="12" stroke-linejoin="round"/>
<path d="M886,1232 Q1102,1326 1400,1310 Q1148,1151 914,1128 Z" fill="#6a574a" stroke="#3a2e26" stroke-width="12" stroke-linejoin="round"/>
<path d="M925,1228 Q1099,1179 1250,1000 Q1016,1019 875,1132 Z" fill="#6a574a" stroke="#3a2e26" stroke-width="12" stroke-linejoin="round"/>
<path d="M450.0,1150.0 C416.7,1171.7 533.3,1245.0 600.0,1280.0 C666.7,1315.0 770.0,1343.3 850.0,1360.0 C930.0,1376.7 1055.0,1398.3 1080.0,1380.0 C1105.0,1361.7 1046.7,1288.3 1000.0,1250.0 C953.3,1211.7 891.7,1166.7 800.0,1150.0 C708.3,1133.3 483.3,1128.3 450.0,1150.0 Z" fill="#574638" stroke="none" stroke-width="0" stroke-linecap="round" stroke-linejoin="round" />
<path d="M480.0,1130.0 C516.7,1141.7 621.7,1201.7 700.0,1200.0 C778.3,1198.3 895.0,1160.0 950.0,1120.0 C1005.0,1080.0 1016.7,986.7 1030.0,960.0" fill="none" stroke="#4a3b33" stroke-width="44" stroke-linecap="round" stroke-linejoin="round" />
<path d="M520.0,1110.0 C556.7,1118.3 663.3,1166.7 740.0,1160.0 C816.7,1153.3 940.0,1085.0 980.0,1070.0" fill="none" stroke="#7a6352" stroke-width="20" stroke-linecap="round" stroke-linejoin="round" />
</svg>
<svg class="a" style="left:35px;top:1260px" width="160" height="155" viewBox="0 0 1543 1495">
<defs><filter id="glow" x="-30%" y="-30%" width="160%" height="160%"><feGaussianBlur stdDeviation="45"/></filter><linearGradient id="parch" x1="0" y1="0" x2="1" y2="1"><stop offset="0" stop-color="#efe4cf"/><stop offset="0.5" stop-color="#dccaa8"/><stop offset="1" stop-color="#c2a57c"/></linearGradient></defs>
<path d="M160.0,330.0 C185.0,305.0 226.7,271.7 300.0,250.0 C373.3,228.3 496.7,218.3 600.0,200.0 C703.3,181.7 846.7,141.7 920.0,140.0 C993.3,138.3 1008.3,160.0 1040.0,190.0 C1071.7,220.0 1088.3,258.3 1110.0,320.0 C1131.7,381.7 1145.0,480.0 1170.0,560.0 C1195.0,640.0 1228.3,730.0 1260.0,800.0 C1291.7,870.0 1348.3,935.0 1360.0,980.0 C1371.7,1025.0 1373.3,1041.7 1330.0,1070.0 C1286.7,1098.3 1171.7,1128.3 1100.0,1150.0 C1028.3,1171.7 956.7,1171.7 900.0,1200.0 C843.3,1228.3 806.7,1300.0 760.0,1320.0 C713.3,1340.0 653.3,1340.0 620.0,1320.0 C586.7,1300.0 576.7,1253.3 560.0,1200.0 C543.3,1146.7 546.7,1056.7 520.0,1000.0 C493.3,943.3 428.3,906.7 400.0,860.0 C371.7,813.3 360.0,783.3 350.0,720.0 C340.0,656.7 365.0,521.7 340.0,480.0 C315.0,438.3 231.7,483.3 200.0,470.0 C168.3,456.7 156.7,423.3 150.0,400.0 C143.3,376.7 135.0,355.0 160.0,330.0 Z" fill="#e878c8" stroke="#e878c8" stroke-width="50" stroke-linecap="round" stroke-linejoin="round" filter="url(#glow)" opacity="0.75"/>
<path d="M160.0,330.0 C185.0,305.0 226.7,271.7 300.0,250.0 C373.3,228.3 496.7,218.3 600.0,200.0 C703.3,181.7 846.7,141.7 920.0,140.0 C993.3,138.3 1008.3,160.0 1040.0,190.0 C1071.7,220.0 1088.3,258.3 1110.0,320.0 C1131.7,381.7 1145.0,480.0 1170.0,560.0 C1195.0,640.0 1228.3,730.0 1260.0,800.0 C1291.7,870.0 1348.3,935.0 1360.0,980.0 C1371.7,1025.0 1373.3,1041.7 1330.0,1070.0 C1286.7,1098.3 1171.7,1128.3 1100.0,1150.0 C1028.3,1171.7 956.7,1171.7 900.0,1200.0 C843.3,1228.3 806.7,1300.0 760.0,1320.0 C713.3,1340.0 653.3,1340.0 620.0,1320.0 C586.7,1300.0 576.7,1253.3 560.0,1200.0 C543.3,1146.7 546.7,1056.7 520.0,1000.0 C493.3,943.3 428.3,906.7 400.0,860.0 C371.7,813.3 360.0,783.3 350.0,720.0 C340.0,656.7 365.0,521.7 340.0,480.0 C315.0,438.3 231.7,483.3 200.0,470.0 C168.3,456.7 156.7,423.3 150.0,400.0 C143.3,376.7 135.0,355.0 160.0,330.0 Z" fill="url(#parch)" stroke="#4a3426" stroke-width="18" stroke-linecap="round" stroke-linejoin="round" />
<circle cx="250" cy="380" r="80" fill="#7a5a40" stroke="#3a2618" stroke-width="14"/><circle cx="255" cy="390" r="38" fill="#d47ac7"/>
<circle cx="640" cy="1260" r="70" fill="#8a6a4a" stroke="#3a2618" stroke-width="14"/>
<g fill="none" stroke="#d8326e" stroke-width="36" stroke-linecap="round"><circle cx="620" cy="580" r="120" stroke-dasharray="600 160"/><circle cx="760" cy="420" r="90" stroke-dasharray="450 120"/><path d="M500,490 A170,170 0 0 0 520,700"/><path d="M860,300 A200,200 0 0 1 990,470"/><path d="M760,760 L830,880 M840,600 L940,900 M900,580 L970,720"/></g>
<g fill="#d8326e"><circle cx="1080" cy="730" r="34"/><circle cx="1120" cy="860" r="34"/><circle cx="1000" cy="850" r="30"/><circle cx="680" cy="910" r="38"/><circle cx="820" cy="940" r="30"/><circle cx="780" cy="1030" r="32"/><circle cx="940" cy="1060" r="32"/><circle cx="1070" cy="1010" r="32"/></g>
</svg>
<svg class="a" style="left:225.0px;top:1220px" width="170" height="165" viewBox="0 0 1540 1495">
<defs><clipPath id="cp225"><rect x="150" y="170" width="1190" height="1160"/></clipPath></defs>
<g clip-path="url(#cp225)">
<rect x="100" y="100" width="1300" height="1300" fill="#c8a56f"/>
<path d="M100.0,100.0 C300.0,-10.0 1100.0,16.7 1300.0,100.0 C1500.0,183.3 1333.3,483.3 1300.0,600.0 C1266.7,716.7 1166.7,796.7 1100.0,800.0 C1033.3,803.3 983.3,660.0 900.0,620.0 C816.7,580.0 691.7,546.7 600.0,560.0 C508.3,573.3 433.3,666.7 350.0,700.0 C266.7,733.3 141.7,860.0 100.0,760.0 C58.3,660.0 -100.0,210.0 100.0,100.0 Z" fill="#b08a5c" stroke="none" stroke-width="0" stroke-linecap="round" stroke-linejoin="round" />
<path d="M1100.0,100.0 C1131.7,50.0 1300.0,-66.7 1340.0,100.0 C1380.0,266.7 1360.0,966.7 1340.0,1100.0 C1320.0,1233.3 1260.0,966.7 1220.0,900.0 C1180.0,833.3 1111.7,783.3 1100.0,700.0 C1088.3,616.7 1150.0,500.0 1150.0,400.0 C1150.0,300.0 1068.3,150.0 1100.0,100.0 Z" fill="#7a5a40" stroke="none" stroke-width="0" stroke-linecap="round" stroke-linejoin="round" />
<path d="M1150.0,600.0 C1165.0,566.7 1308.3,616.7 1340.0,700.0 C1371.7,783.3 1355.0,1066.7 1340.0,1100.0 C1325.0,1133.3 1281.7,983.3 1250.0,900.0 C1218.3,816.7 1135.0,633.3 1150.0,600.0 Z" fill="#8a4a30" stroke="none" stroke-width="0" stroke-linecap="round" stroke-linejoin="round" />
<path d="M100.0,400.0 C133.3,353.3 261.7,458.3 300.0,500.0 C338.3,541.7 346.7,606.7 330.0,650.0 C313.3,693.3 238.3,738.3 200.0,760.0 C161.7,781.7 116.7,840.0 100.0,780.0 C83.3,720.0 66.7,446.7 100.0,400.0 Z" fill="#55605a" stroke="none" stroke-width="0" stroke-linecap="round" stroke-linejoin="round" />
<path d="M300.0,620.0 C315.0,593.3 366.7,530.0 420.0,520.0 C473.3,510.0 540.0,530.0 620.0,560.0 C700.0,590.0 816.7,643.3 900.0,700.0 C983.3,756.7 1056.7,813.3 1120.0,900.0 C1183.3,986.7 1261.7,1168.3 1280.0,1220.0 C1298.3,1271.7 1276.7,1263.3 1230.0,1210.0 C1183.3,1156.7 1071.7,975.0 1000.0,900.0 C928.3,825.0 843.3,760.0 800.0,760.0 C756.7,760.0 731.7,830.0 740.0,900.0 C748.3,970.0 840.0,1133.3 850.0,1180.0 C860.0,1226.7 833.3,1235.0 800.0,1180.0 C766.7,1125.0 700.0,933.3 650.0,850.0 C600.0,766.7 553.3,708.3 500.0,680.0 C446.7,651.7 363.3,690.0 330.0,680.0 C296.7,670.0 285.0,646.7 300.0,620.0 Z" fill="#7a5545" stroke="#2a1c16" stroke-width="14" stroke-linecap="round" stroke-linejoin="round" />
</g>
<rect x="115" y="150" width="1235" height="1195" fill="none" stroke="#3a2420" stroke-width="74"/>
<rect x="115" y="150" width="1235" height="1195" fill="none" stroke="#eed8d0" stroke-width="48"/>
<g stroke="#6a4a40" stroke-width="6" fill="none" opacity="0.7"><path d="M150,150 H340 M420,150 H600 M680,150 H900 M960,150 H1300 M150,1345 H380 M460,1345 H900 M990,1345 H1300 M115,200 V700 M115,780 V1300 M1350,220 V860 M1350,930 V1300"/></g>
<g stroke="#b86a48" stroke-width="26" stroke-linecap="round"><path d="M150,165 l-60,-60 M150,165 l60,60 M150,165 l60,-60 M150,165 l-60,60"/></g>
<circle cx="150" cy="165" r="40" fill="#a0583a" stroke="#3a2420" stroke-width="10"/>
<g stroke="#b86a48" stroke-width="26" stroke-linecap="round"><path d="M1330,175 l-60,-60 M1330,175 l60,60 M1330,175 l60,-60 M1330,175 l-60,60"/></g>
<circle cx="1330" cy="175" r="40" fill="#a0583a" stroke="#3a2420" stroke-width="10"/>
<g stroke="#b86a48" stroke-width="26" stroke-linecap="round"><path d="M150,1315 l-60,-60 M150,1315 l60,60 M150,1315 l60,-60 M150,1315 l-60,60"/></g>
<circle cx="150" cy="1315" r="40" fill="#a0583a" stroke="#3a2420" stroke-width="10"/>
<g stroke="#b86a48" stroke-width="26" stroke-linecap="round"><path d="M1330,1320 l-60,-60 M1330,1320 l60,60 M1330,1320 l60,-60 M1330,1320 l-60,60"/></g>
<circle cx="1330" cy="1320" r="40" fill="#a0583a" stroke="#3a2420" stroke-width="10"/>
</svg>
<svg class="a" style="left:416.9px;top:1220px" width="170" height="165" viewBox="0 0 1540 1495">
<defs><clipPath id="cp416"><rect x="150" y="170" width="1190" height="1160"/></clipPath></defs>
<g clip-path="url(#cp416)">
<rect x="100" y="100" width="1300" height="1300" fill="#8e8780"/>
<path d="M100.0,100.0 C306.7,16.7 1133.3,-33.3 1340.0,100.0 C1546.7,233.3 1396.7,783.3 1340.0,900.0 C1283.3,1016.7 1123.3,883.3 1000.0,800.0 C876.7,716.7 716.7,450.0 600.0,400.0 C483.3,350.0 383.3,466.7 300.0,500.0 C216.7,533.3 133.3,666.7 100.0,600.0 C66.7,533.3 -106.7,183.3 100.0,100.0 Z" fill="#5e5854" stroke="none" stroke-width="0" stroke-linecap="round" stroke-linejoin="round" />
<path d="M100.0,600.0 C150.0,533.3 333.3,510.0 400.0,560.0 C466.7,610.0 516.7,833.3 500.0,900.0 C483.3,966.7 366.7,950.0 300.0,960.0 C233.3,970.0 133.3,1020.0 100.0,960.0 C66.7,900.0 50.0,666.7 100.0,600.0 Z" fill="#8a93a8" stroke="none" stroke-width="0" stroke-linecap="round" stroke-linejoin="round" />
<path d="M100.0,950.0 C166.7,876.7 366.7,875.0 500.0,900.0 C633.3,925.0 760.0,1050.0 900.0,1100.0 C1040.0,1150.0 1266.7,1160.0 1340.0,1200.0 C1413.3,1240.0 1546.7,1316.7 1340.0,1340.0 C1133.3,1363.3 306.7,1405.0 100.0,1340.0 C-106.7,1275.0 33.3,1023.3 100.0,950.0 Z" fill="#c9a184" stroke="none" stroke-width="0" stroke-linecap="round" stroke-linejoin="round" />
<path d="M160.0,200.0 C186.7,143.3 316.7,146.7 360.0,180.0 C403.3,213.3 446.7,343.3 420.0,400.0 C393.3,456.7 243.3,553.3 200.0,520.0 C156.7,486.7 133.3,256.7 160.0,200.0 Z" fill="#d9d2c8" stroke="none" stroke-width="0" stroke-linecap="round" stroke-linejoin="round" />
<path d="M100.0,300.0 C125.0,258.3 225.0,350.0 250.0,400.0 C275.0,450.0 275.0,558.3 250.0,600.0 C225.0,641.7 125.0,700.0 100.0,650.0 C75.0,600.0 75.0,341.7 100.0,300.0 Z" fill="#1e1a18" stroke="none" stroke-width="0" stroke-linecap="round" stroke-linejoin="round" />
<path d="M330.0,600.0 C358.3,515.0 405.0,320.0 500.0,290.0 C595.0,260.0 775.0,341.7 900.0,420.0 C1025.0,498.3 1183.3,688.3 1250.0,760.0 C1316.7,831.7 1341.7,835.0 1300.0,850.0 C1258.3,865.0 1033.3,791.7 1000.0,850.0 C966.7,908.3 1083.3,1125.0 1100.0,1200.0 C1116.7,1275.0 1166.7,1325.0 1100.0,1300.0 C1033.3,1275.0 808.3,1108.3 700.0,1050.0 C591.7,991.7 511.7,991.7 450.0,950.0 C388.3,908.3 350.0,858.3 330.0,800.0 C310.0,741.7 301.7,685.0 330.0,600.0 Z" fill="#5e5450" stroke="#1e1a18" stroke-width="16" stroke-linecap="round" stroke-linejoin="round" />
<path d="M520.0,460.0 C560.0,435.0 686.7,456.7 800.0,500.0 C913.3,543.3 1166.7,670.0 1200.0,720.0 C1233.3,770.0 1083.3,793.3 1000.0,800.0 C916.7,806.7 773.3,785.0 700.0,760.0 C626.7,735.0 590.0,700.0 560.0,650.0 C530.0,600.0 480.0,485.0 520.0,460.0 Z" fill="#d8b8bc" stroke="#2a2220" stroke-width="12" stroke-linecap="round" stroke-linejoin="round" />
<path d="M560.0,480.0 C610.0,466.7 856.7,496.7 900.0,520.0 C943.3,543.3 870.0,606.7 820.0,620.0 C770.0,633.3 643.3,623.3 600.0,600.0 C556.7,576.7 510.0,493.3 560.0,480.0 Z" fill="#f0eaea" stroke="none" stroke-width="0" stroke-linecap="round" stroke-linejoin="round" />
<path d="M370.0,750.0 C380.0,773.3 433.3,858.3 480.0,900.0 C526.7,941.7 636.7,1000.0 650.0,1000.0 C663.3,1000.0 598.3,940.0 560.0,900.0 C521.7,860.0 451.7,785.0 420.0,760.0 C388.3,735.0 360.0,726.7 370.0,750.0 Z" fill="#eeeeee" stroke="none" stroke-width="0" stroke-linecap="round" stroke-linejoin="round" />
<path d="M1000.0,850.0 C1026.7,766.7 1283.3,733.3 1340.0,800.0 C1396.7,866.7 1366.7,1166.7 1340.0,1250.0 C1313.3,1333.3 1236.7,1366.7 1180.0,1300.0 C1123.3,1233.3 973.3,933.3 1000.0,850.0 Z" fill="#8a8078" stroke="none" stroke-width="0" stroke-linecap="round" stroke-linejoin="round" />
</g>
<rect x="115" y="150" width="1235" height="1195" fill="none" stroke="#3a2420" stroke-width="74"/>
<rect x="115" y="150" width="1235" height="1195" fill="none" stroke="#eed8d0" stroke-width="48"/>
<g stroke="#6a4a40" stroke-width="6" fill="none" opacity="0.7"><path d="M150,150 H340 M420,150 H600 M680,150 H900 M960,150 H1300 M150,1345 H380 M460,1345 H900 M990,1345 H1300 M115,200 V700 M115,780 V1300 M1350,220 V860 M1350,930 V1300"/></g>
<g stroke="#b86a48" stroke-width="26" stroke-linecap="round"><path d="M150,165 l-60,-60 M150,165 l60,60 M150,165 l60,-60 M150,165 l-60,60"/></g>
<circle cx="150" cy="165" r="40" fill="#a0583a" stroke="#3a2420" stroke-width="10"/>
<g stroke="#b86a48" stroke-width="26" stroke-linecap="round"><path d="M1330,175 l-60,-60 M1330,175 l60,60 M1330,175 l60,-60 M1330,175 l-60,60"/></g>
<circle cx="1330" cy="175" r="40" fill="#a0583a" stroke="#3a2420" stroke-width="10"/>
<g stroke="#b86a48" stroke-width="26" stroke-linecap="round"><path d="M150,1315 l-60,-60 M150,1315 l60,60 M150,1315 l60,-60 M150,1315 l-60,60"/></g>
<circle cx="150" cy="1315" r="40" fill="#a0583a" stroke="#3a2420" stroke-width="10"/>
<g stroke="#b86a48" stroke-width="26" stroke-linecap="round"><path d="M1330,1320 l-60,-60 M1330,1320 l60,60 M1330,1320 l60,-60 M1330,1320 l-60,60"/></g>
<circle cx="1330" cy="1320" r="40" fill="#a0583a" stroke="#3a2420" stroke-width="10"/>
</svg>
<svg class="a" style="left:608.5px;top:1220px" width="170" height="165" viewBox="0 0 1540 1495">
<defs><clipPath id="cp608"><rect x="150" y="170" width="1190" height="1160"/></clipPath></defs>
<g clip-path="url(#cp608)">
<rect x="100" y="100" width="1300" height="1300" fill="#221510"/>
<path d="M760.0,100.0 C856.7,40.0 1243.3,-106.7 1340.0,100.0 C1436.7,306.7 1433.3,1133.3 1340.0,1340.0 C1246.7,1546.7 880.0,1396.7 780.0,1340.0 C680.0,1283.3 733.3,1106.7 740.0,1000.0 C746.7,893.3 816.7,790.0 820.0,700.0 C823.3,610.0 770.0,560.0 760.0,460.0 C750.0,360.0 663.3,160.0 760.0,100.0 Z" fill="#9a6c48" stroke="none" stroke-width="0" stroke-linecap="round" stroke-linejoin="round" />
<path d="M850.0,650.0 C875.0,600.0 1018.3,525.0 1100.0,500.0 C1181.7,475.0 1300.0,433.3 1340.0,500.0 C1380.0,566.7 1380.0,825.0 1340.0,900.0 C1300.0,975.0 1165.0,966.7 1100.0,950.0 C1035.0,933.3 991.7,850.0 950.0,800.0 C908.3,750.0 825.0,700.0 850.0,650.0 Z" fill="#b88a62" stroke="none" stroke-width="0" stroke-linecap="round" stroke-linejoin="round" />
<path d="M720.0,160.0 C780.0,126.7 1020.0,130.0 1100.0,150.0 C1180.0,170.0 1216.7,226.7 1200.0,280.0 C1183.3,333.3 1066.7,433.3 1000.0,470.0 C933.3,506.7 843.3,520.0 800.0,500.0 C756.7,480.0 753.3,406.7 740.0,350.0 C726.7,293.3 660.0,193.3 720.0,160.0 Z" fill="#d6bb98" stroke="#2a1c14" stroke-width="14" stroke-linecap="round" stroke-linejoin="round" />
<path d="M760.0,450.0 C773.3,463.3 830.0,523.3 880.0,520.0 C930.0,516.7 1010.0,486.7 1060.0,430.0 C1110.0,373.3 1168.3,225.0 1180.0,180.0 C1191.7,135.0 1160.0,123.3 1130.0,160.0 C1100.0,196.7 1055.0,353.3 1000.0,400.0 C945.0,446.7 840.0,431.7 800.0,440.0 C760.0,448.3 746.7,436.7 760.0,450.0 Z" fill="#e8d8c0" stroke="#2a1c14" stroke-width="10" stroke-linecap="round" stroke-linejoin="round" />
<path d="M250.0,1100.0 C258.3,1030.0 425.0,803.3 500.0,700.0 C575.0,596.7 653.3,493.3 700.0,480.0 C746.7,466.7 770.0,541.7 780.0,620.0 C790.0,698.3 773.3,873.3 760.0,950.0 C746.7,1026.7 751.7,1051.7 700.0,1080.0 C648.3,1108.3 525.0,1116.7 450.0,1120.0 C375.0,1123.3 241.7,1170.0 250.0,1100.0 Z" fill="#d8c6aa" stroke="#120a08" stroke-width="14" stroke-linecap="round" stroke-linejoin="round" />
<path d="M350.0,1050.0 C348.3,998.3 491.7,821.7 550.0,750.0 C608.3,678.3 678.3,586.7 700.0,620.0 C721.7,653.3 703.3,876.7 680.0,950.0 C656.7,1023.3 615.0,1043.3 560.0,1060.0 C505.0,1076.7 351.7,1101.7 350.0,1050.0 Z" fill="#f0e6d6" stroke="none" stroke-width="0" stroke-linecap="round" stroke-linejoin="round" />
<circle cx="1130" cy="1070" r="60" fill="#e29a8a" stroke="#3a1c14" stroke-width="14"/><circle cx="1140" cy="1075" r="18" fill="#5a2a20"/>
<path d="M900.0,1060.0 C900.0,1026.7 946.7,996.7 1000.0,1000.0 C1053.3,1003.3 1186.7,1053.3 1220.0,1080.0 C1253.3,1106.7 1236.7,1140.0 1200.0,1160.0 C1163.3,1180.0 1050.0,1216.7 1000.0,1200.0 C950.0,1183.3 900.0,1093.3 900.0,1060.0 Z" fill="#a07a58" stroke="none" stroke-width="0" stroke-linecap="round" stroke-linejoin="round" opacity="0.5"/>
</g>
<rect x="115" y="150" width="1235" height="1195" fill="none" stroke="#3a2420" stroke-width="74"/>
<rect x="115" y="150" width="1235" height="1195" fill="none" stroke="#eed8d0" stroke-width="48"/>
<g stroke="#6a4a40" stroke-width="6" fill="none" opacity="0.7"><path d="M150,150 H340 M420,150 H600 M680,150 H900 M960,150 H1300 M150,1345 H380 M460,1345 H900 M990,1345 H1300 M115,200 V700 M115,780 V1300 M1350,220 V860 M1350,930 V1300"/></g>
<g stroke="#b86a48" stroke-width="26" stroke-linecap="round"><path d="M150,165 l-60,-60 M150,165 l60,60 M150,165 l60,-60 M150,165 l-60,60"/></g>
<circle cx="150" cy="165" r="40" fill="#a0583a" stroke="#3a2420" stroke-width="10"/>
<g stroke="#b86a48" stroke-width="26" stroke-linecap="round"><path d="M1330,175 l-60,-60 M1330,175 l60,60 M1330,175 l60,-60 M1330,175 l-60,60"/></g>
<circle cx="1330" cy="175" r="40" fill="#a0583a" stroke="#3a2420" stroke-width="10"/>
<g stroke="#b86a48" stroke-width="26" stroke-linecap="round"><path d="M150,1315 l-60,-60 M150,1315 l60,60 M150,1315 l60,-60 M150,1315 l-60,60"/></g>
<circle cx="150" cy="1315" r="40" fill="#a0583a" stroke="#3a2420" stroke-width="10"/>
<g stroke="#b86a48" stroke-width="26" stroke-linecap="round"><path d="M1330,1320 l-60,-60 M1330,1320 l60,60 M1330,1320 l60,-60 M1330,1320 l-60,60"/></g>
<circle cx="1330" cy="1320" r="40" fill="#a0583a" stroke="#3a2420" stroke-width="10"/>
</svg>
<svg class="a" style="left:801.1px;top:1220px" width="170" height="165" viewBox="0 0 1540 1495">
<defs><clipPath id="cp801"><rect x="150" y="170" width="1190" height="1160"/></clipPath></defs>
<g clip-path="url(#cp801)">
<rect x="100" y="100" width="1300" height="1300" fill="#6e4530"/>
<path d="M100.0,100.0 C216.7,-16.7 691.7,50.0 800.0,100.0 C908.3,150.0 775.0,300.0 750.0,400.0 C725.0,500.0 688.3,616.7 650.0,700.0 C611.7,783.3 561.7,866.7 520.0,900.0 C478.3,933.3 470.0,916.7 400.0,900.0 C330.0,883.3 150.0,933.3 100.0,800.0 C50.0,666.7 -16.7,216.7 100.0,100.0 Z" fill="#52201c" stroke="none" stroke-width="0" stroke-linecap="round" stroke-linejoin="round" />
<path d="M300.0,250.0 C350.0,191.7 566.7,225.0 600.0,300.0 C633.3,375.0 550.0,641.7 500.0,700.0 C450.0,758.3 333.3,725.0 300.0,650.0 C266.7,575.0 250.0,308.3 300.0,250.0 Z" fill="#6a2a24" stroke="none" stroke-width="0" stroke-linecap="round" stroke-linejoin="round" opacity="0.7"/>
<path d="M100.0,790.0 C133.3,705.0 230.0,803.3 300.0,830.0 C370.0,856.7 463.3,888.3 520.0,950.0 C576.7,1011.7 613.3,1135.0 640.0,1200.0 C666.7,1265.0 770.0,1316.7 680.0,1340.0 C590.0,1363.3 196.7,1431.7 100.0,1340.0 C3.3,1248.3 66.7,875.0 100.0,790.0 Z" fill="#6f7434" stroke="none" stroke-width="0" stroke-linecap="round" stroke-linejoin="round" />
<path d="M950.0,100.0 C990.0,0.0 1275.0,-106.7 1340.0,100.0 C1405.0,306.7 1413.3,1133.3 1340.0,1340.0 C1266.7,1546.7 965.0,1413.3 900.0,1340.0 C835.0,1266.7 916.7,1006.7 950.0,900.0 C983.3,793.3 1100.0,833.3 1100.0,700.0 C1100.0,566.7 910.0,200.0 950.0,100.0 Z" fill="#7a5038" stroke="none" stroke-width="0" stroke-linecap="round" stroke-linejoin="round" />
<path d="M740.0,260.0 C751.7,223.3 743.3,190.0 820.0,210.0 C896.7,230.0 1123.3,331.7 1200.0,380.0 C1276.7,428.3 1280.0,460.0 1280.0,500.0 C1280.0,540.0 1246.7,588.3 1200.0,620.0 C1153.3,651.7 1058.3,693.3 1000.0,690.0 C941.7,686.7 891.7,643.3 850.0,600.0 C808.3,556.7 768.3,486.7 750.0,430.0 C731.7,373.3 728.3,296.7 740.0,260.0 Z" fill="#ddd3bc" stroke="#2a1c14" stroke-width="12" stroke-linecap="round" stroke-linejoin="round" />
<path d="M840.0,340.0 C881.7,323.3 1115.0,383.3 1150.0,420.0 C1185.0,456.7 1091.7,543.3 1050.0,560.0 C1008.3,576.7 935.0,556.7 900.0,520.0 C865.0,483.3 798.3,356.7 840.0,340.0 Z" fill="#5a4a3a" stroke="none" stroke-width="0" stroke-linecap="round" stroke-linejoin="round" opacity="0.7"/>
<path d="M690.0,620.0 C703.3,601.7 728.3,613.3 780.0,640.0 C831.7,666.7 931.7,720.0 1000.0,780.0 C1068.3,840.0 1160.0,953.3 1190.0,1000.0 C1220.0,1046.7 1211.7,1060.0 1180.0,1060.0 C1148.3,1060.0 1055.0,1026.7 1000.0,1000.0 C945.0,973.3 900.0,941.7 850.0,900.0 C800.0,858.3 726.7,796.7 700.0,750.0 C673.3,703.3 676.7,638.3 690.0,620.0 Z" fill="#d6ccb4" stroke="#2a1c14" stroke-width="12" stroke-linecap="round" stroke-linejoin="round" />
<path d="M780.0,720.0 C796.7,711.7 980.0,820.0 1000.0,850.0 C1020.0,880.0 936.7,921.7 900.0,900.0 C863.3,878.3 763.3,728.3 780.0,720.0 Z" fill="#4a3a30" stroke="none" stroke-width="0" stroke-linecap="round" stroke-linejoin="round" opacity="0.7"/>
<path d="M530.0,800.0 C540.0,733.3 575.0,691.7 620.0,700.0 C665.0,708.3 750.0,783.3 800.0,850.0 C850.0,916.7 906.7,1018.3 920.0,1100.0 C933.3,1181.7 920.0,1300.0 880.0,1340.0 C840.0,1380.0 733.3,1380.0 680.0,1340.0 C626.7,1300.0 585.0,1190.0 560.0,1100.0 C535.0,1010.0 520.0,866.7 530.0,800.0 Z" fill="#d8ceb6" stroke="#2a1c14" stroke-width="12" stroke-linecap="round" stroke-linejoin="round" />
<path d="M650.0,850.0 C663.3,833.3 755.0,900.0 780.0,950.0 C805.0,1000.0 813.3,1133.3 800.0,1150.0 C786.7,1166.7 725.0,1100.0 700.0,1050.0 C675.0,1000.0 636.7,866.7 650.0,850.0 Z" fill="#4a3a30" stroke="none" stroke-width="0" stroke-linecap="round" stroke-linejoin="round" opacity="0.7"/>
</g>
<rect x="115" y="150" width="1235" height="1195" fill="none" stroke="#3a2420" stroke-width="74"/>
<rect x="115" y="150" width="1235" height="1195" fill="none" stroke="#eed8d0" stroke-width="48"/>
<g stroke="#6a4a40" stroke-width="6" fill="none" opacity="0.7"><path d="M150,150 H340 M420,150 H600 M680,150 H900 M960,150 H1300 M150,1345 H380 M460,1345 H900 M990,1345 H1300 M115,200 V700 M115,780 V1300 M1350,220 V860 M1350,930 V1300"/></g>
<g stroke="#b86a48" stroke-width="26" stroke-linecap="round"><path d="M150,165 l-60,-60 M150,165 l60,60 M150,165 l60,-60 M150,165 l-60,60"/></g>
<circle cx="150" cy="165" r="40" fill="#a0583a" stroke="#3a2420" stroke-width="10"/>
<g stroke="#b86a48" stroke-width="26" stroke-linecap="round"><path d="M1330,175 l-60,-60 M1330,175 l60,60 M1330,175 l60,-60 M1330,175 l-60,60"/></g>
<circle cx="1330" cy="175" r="40" fill="#a0583a" stroke="#3a2420" stroke-width="10"/>
<g stroke="#b86a48" stroke-width="26" stroke-linecap="round"><path d="M150,1315 l-60,-60 M150,1315 l60,60 M150,1315 l60,-60 M150,1315 l-60,60"/></g>
<circle cx="150" cy="1315" r="40" fill="#a0583a" stroke="#3a2420" stroke-width="10"/>
<g stroke="#b86a48" stroke-width="26" stroke-linecap="round"><path d="M1330,1320 l-60,-60 M1330,1320 l60,60 M1330,1320 l60,-60 M1330,1320 l-60,60"/></g>
<circle cx="1330" cy="1320" r="40" fill="#a0583a" stroke="#3a2420" stroke-width="10"/>
</svg>
<svg class="a" style="left:993px;top:1220px" width="170" height="165" viewBox="0 0 1540 1495">
<defs><linearGradient id="fur" x1="0" y1="0" x2="0" y2="1"><stop offset="0" stop-color="#5a4a40"/><stop offset="0.2" stop-color="#9a8e82"/><stop offset="0.5" stop-color="#d0c8bc"/><stop offset="1" stop-color="#ece6da"/></linearGradient></defs>
<rect x="150" y="160" width="1200" height="1180" rx="60" fill="url(#fur)"/>
<g fill="none" stroke="#fff" stroke-opacity="0.18" stroke-width="22"><path d="M200,500 C500,420 900,560 1300,460 M200,800 C600,700 900,860 1300,760 M200,1050 C500,980 900,1120 1300,1000"/></g>
<rect x="140" y="150" width="1220" height="1200" rx="80" fill="none" stroke="#2a140a" stroke-width="84"/>
<rect x="140" y="150" width="1220" height="1200" rx="80" fill="none" stroke="#84462a" stroke-width="50"/>
<rect x="140" y="150" width="1220" height="1200" rx="80" fill="none" stroke="#c07a50" stroke-width="12" stroke-dasharray="200 120"/>
<path d="M800,120 C900,70 1000,80 1040,110" stroke="#a4582e" stroke-width="40" fill="none"/>
<path d="M720,1400 C780,1320 860,1300 900,1330" stroke="#a4582e" stroke-width="40" fill="none"/>
<ellipse cx="1380" cy="280" rx="36" ry="70" fill="#d99a2a" stroke="#5a3010" stroke-width="10"/>
<ellipse cx="90" cy="640" rx="36" ry="70" fill="#d99a2a" stroke="#5a3010" stroke-width="10"/>
<ellipse cx="1380" cy="1240" rx="36" ry="70" fill="#d99a2a" stroke="#5a3010" stroke-width="10"/>
</svg>
<!--/ITEMS-->
</body></html>
